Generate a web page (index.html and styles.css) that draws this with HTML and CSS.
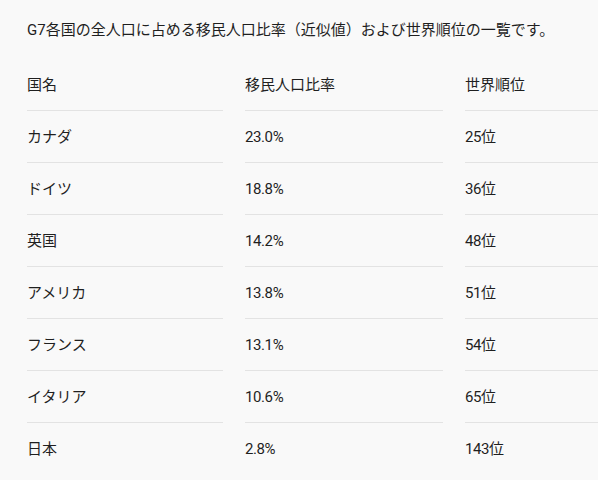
FILE: index.html
```html
<!DOCTYPE html>
<html lang="ja">
<head>
<meta charset="utf-8">
<link rel="stylesheet" href="styles.css">
</head>
<body>
<p class="intro">G7各国の全人口に占める移民人口比率（近似値）および世界順位の一覧です。</p>
<div class="table-wrap">
  <div class="table">
    <div class="cell head">国名</div><div class="cell head">移民人口比率</div><div class="cell head">世界順位</div>
    <div class="cell">カナダ</div><div class="cell num">23.0%</div><div class="cell num">25位</div>
    <div class="cell">ドイツ</div><div class="cell num">18.8%</div><div class="cell num">36位</div>
    <div class="cell">英国</div><div class="cell num">14.2%</div><div class="cell num">48位</div>
    <div class="cell">アメリカ</div><div class="cell num">13.8%</div><div class="cell num">51位</div>
    <div class="cell">フランス</div><div class="cell num">13.1%</div><div class="cell num">54位</div>
    <div class="cell">イタリア</div><div class="cell num">10.6%</div><div class="cell num">65位</div>
    <div class="cell last">日本</div><div class="cell num last">2.8%</div><div class="cell num last">143位</div>
  </div>
</div>
</body>
</html>
```

FILE: styles.css
```css
html, body {
  margin: 0;
  padding: 0;
  background: #f9f9f9;
}
body {
  padding-left: 27px;
  font-family: "Roboto", "Noto Sans CJK JP", sans-serif;
  font-size: 15px;
  line-height: 24px;
  color: #1f1f1f;
  overflow: hidden;
}
.intro {
  margin: 18px 0 17px;
}
.table-wrap {
  overflow: hidden;
}
.table {
  display: grid;
  grid-template-columns: 196px 198px 198px;
  column-gap: 22px;
}
.cell {
  padding: 14px 0 13px;
  border-bottom: 1px solid #e3e3e3;
  white-space: nowrap;
}
.cell.num {
  letter-spacing: -0.4px;
}
.cell.last {
  border-bottom: none;
}
```
